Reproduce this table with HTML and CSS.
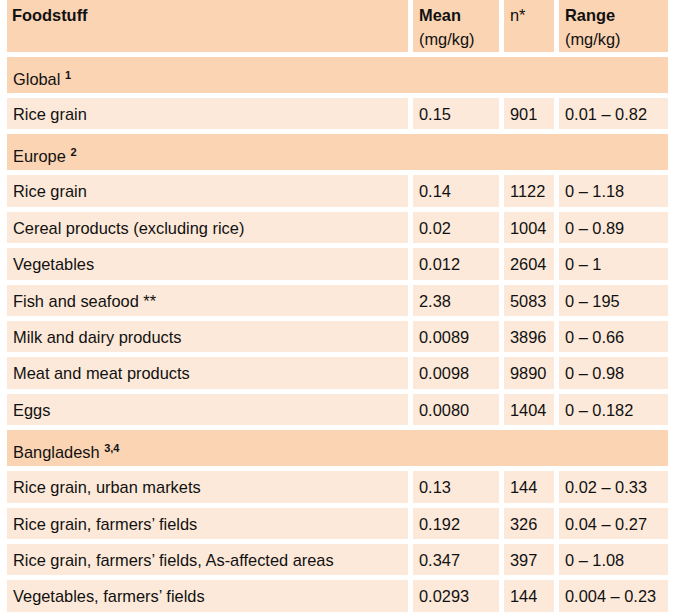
FILE: index.html
```html
<!DOCTYPE html>
<html lang="en">
<head>
<meta charset="utf-8">
<title>Arsenic in foodstuffs</title>
<link rel="stylesheet" href="styles.css">
</head>
<body>
<table class="food-table">
  <colgroup>
    <col class="c-food">
    <col class="c-mean">
    <col class="c-n">
    <col class="c-range">
  </colgroup>
  <thead>
    <tr class="head">
      <th><b>Foodstuff</b></th>
      <th><b>Mean</b><br>(mg/kg)</th>
      <th>n*</th>
      <th><b>Range</b><br>(mg/kg)</th>
    </tr>
  </thead>
  <tbody>
    <tr class="section"><td colspan="4">Global <sup>1</sup></td></tr>
    <tr class="data"><td>Rice grain</td><td>0.15</td><td>901</td><td>0.01 – 0.82</td></tr>
    <tr class="section"><td colspan="4">Europe <sup>2</sup></td></tr>
    <tr class="data"><td>Rice grain</td><td>0.14</td><td>1122</td><td>0 – 1.18</td></tr>
    <tr class="data"><td>Cereal products (excluding rice)</td><td>0.02</td><td>1004</td><td>0 – 0.89</td></tr>
    <tr class="data"><td>Vegetables</td><td>0.012</td><td>2604</td><td>0 – 1</td></tr>
    <tr class="data"><td>Fish and seafood **</td><td>2.38</td><td>5083</td><td>0 – 195</td></tr>
    <tr class="data"><td>Milk and dairy products</td><td>0.0089</td><td>3896</td><td>0 – 0.66</td></tr>
    <tr class="data"><td>Meat and meat products</td><td>0.0098</td><td>9890</td><td>0 – 0.98</td></tr>
    <tr class="data"><td>Eggs</td><td>0.0080</td><td>1404</td><td>0 – 0.182</td></tr>
    <tr class="section"><td colspan="4">Bangladesh <sup>3,4</sup></td></tr>
    <tr class="data"><td>Rice grain, urban markets</td><td>0.13</td><td>144</td><td>0.02 – 0.33</td></tr>
    <tr class="data"><td>Rice grain, farmers’ fields</td><td>0.192</td><td>326</td><td>0.04 – 0.27</td></tr>
    <tr class="data"><td>Rice grain, farmers’ fields, As-affected areas</td><td>0.347</td><td>397</td><td>0 – 1.08</td></tr>
    <tr class="data"><td>Vegetables, farmers’ fields</td><td>0.0293</td><td>144</td><td>0.004 – 0.23</td></tr>
  </tbody>
</table>
</body>
</html>
```

FILE: styles.css
```css
html, body {
  margin: 0;
  padding: 0;
  background: #ffffff;
}

body {
  font-family: "Liberation Sans", Arial, sans-serif;
  font-size: 16.4px;
  color: #111111;
}

.food-table {
  margin: -5px 0 0 2px;
  width: 671px;
  table-layout: fixed;
  border-collapse: separate;
  border-spacing: 5px;
}

.c-food { width: 401px; }
.c-mean { width: 86px; }
.c-n { width: 50px; }
.c-range { width: 109px; }

.food-table th,
.food-table td {
  text-align: left;
  vertical-align: top;
  padding: 0 6px;
  white-space: nowrap;
}

.head th {
  background: #fbd4b4;
  font-weight: normal;
  line-height: 24px;
  height: 48px;
  padding-top: 3px;
  padding-bottom: 1px;
}

.head th:first-child {
  padding-left: 5px;
}

.section td {
  background: #fbd4b4;
  line-height: 17px;
  height: 17px;
  padding-top: 14px;
  padding-bottom: 5px;
}

.section sup {
  font-weight: bold;
  font-size: 11px;
  line-height: 0;
  vertical-align: 6px;
}

.data td {
  background: #fde9d9;
  line-height: 17.4px;
  height: 17.4px;
  padding-top: 8px;
  padding-bottom: 6px;
}
```
